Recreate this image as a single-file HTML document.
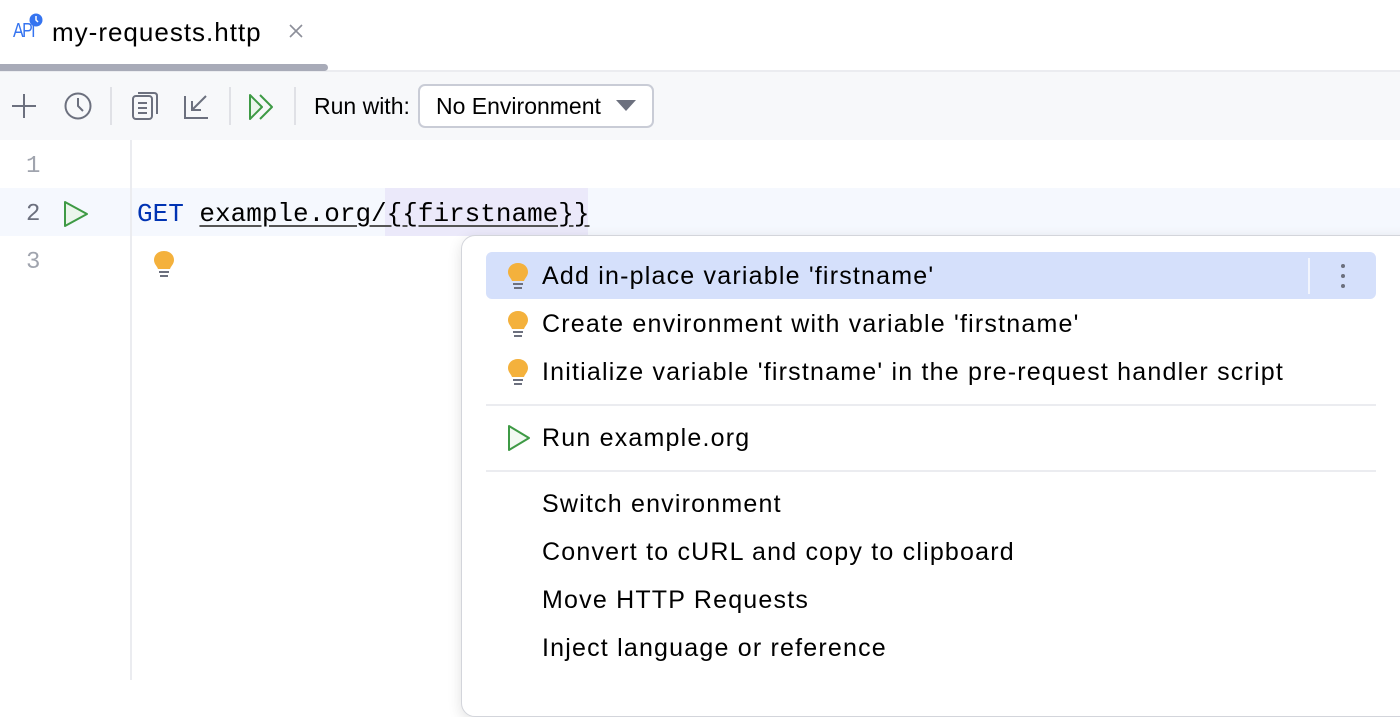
<!DOCTYPE html>
<html><head><style>
body{margin:0;width:1400px;height:680px;overflow:hidden;background:#fff;font-family:"Liberation Sans",sans-serif;position:relative}
.a{position:absolute}
.ui{font-size:25px;letter-spacing:1.2px;color:#000;white-space:nowrap}
.mono{font-family:"Liberation Mono",monospace;font-size:26px;white-space:nowrap}
.sep{position:absolute;top:87px;width:2px;height:38px;background:#e0e1e6}
.bulb{position:absolute;width:22px;height:30px}
</style></head><body>
<div class="a" style="left:0;top:0;width:1400px;height:70px;background:#fff;border-bottom:2px solid #ebecf0"></div>
<div class="a" style="left:0;top:64px;width:328px;height:7px;background:#a8abb8;border-radius:0 4px 4px 0"></div>
<div class="a" style="left:13px;top:20px;font-family:'Liberation Sans',sans-serif;font-size:20px;color:#3574f0;letter-spacing:-2px;transform:scaleX(0.8);transform-origin:left">API</div>
<svg class="a" style="left:28px;top:12px" width="16" height="16"><circle cx="8" cy="8" r="6.5" fill="#3574f0"/><path d="M8 4v4l2 2" stroke="#fff" stroke-width="1.5" fill="none"/></svg>
<div class="a ui" style="left:52px;top:17px;font-size:26px;letter-spacing:1px">my-requests.http</div>
<svg class="a" style="left:288px;top:23px" width="16" height="16"><path d="M2 2L14 14M14 2L2 14" stroke="#8c8f99" stroke-width="1.6"/></svg>
<div class="a" style="left:0;top:72px;width:1400px;height:68px;background:#f7f8fa"></div>
<svg class="a" style="left:10px;top:92px" width="28" height="28"><path d="M14 2V26M2 14H26" stroke="#6c707e" stroke-width="2"/></svg>
<svg class="a" style="left:62px;top:90px" width="32" height="32"><circle cx="16" cy="16" r="12.5" stroke="#6c707e" stroke-width="2" fill="none"/><path d="M16 8V16L21 21" stroke="#6c707e" stroke-width="2" fill="none"/></svg>
<div class="sep" style="left:110px"></div>
<svg class="a" style="left:130px;top:90px" width="30" height="32"><rect x="3" y="6" width="19" height="23" rx="3" stroke="#6c707e" stroke-width="2" fill="none"/><path d="M8 3H24Q27 3 27 6V24" stroke="#6c707e" stroke-width="2" fill="none"/><path d="M8 13H17M8 18H17M8 23H17" stroke="#6c707e" stroke-width="2"/></svg>
<svg class="a" style="left:182px;top:90px" width="30" height="32"><path d="M3 6V28H26" stroke="#6c707e" stroke-width="2" fill="none"/><path d="M24 6L10 20M10 11V20H19" stroke="#6c707e" stroke-width="2" fill="none"/></svg>
<div class="sep" style="left:229px"></div>
<svg class="a" style="left:247px;top:92px" width="30" height="30"><path d="M3 3L15 15L3 27Z" stroke="#3e9a45" stroke-width="2" fill="#ebf5ec" stroke-linejoin="round"/><path d="M13 3L25 15L13 27" stroke="#3e9a45" stroke-width="2" fill="none" stroke-linejoin="round"/></svg>
<div class="sep" style="left:294px"></div>
<div class="a" style="left:314px;top:93px;font-size:23px;color:#000;white-space:nowrap">Run with:</div>
<div class="a" style="left:418px;top:84px;width:232px;height:40px;border:2px solid #c9ccd6;border-radius:7px;background:#fff"></div>
<div class="a" style="left:436px;top:93px;font-size:23px;white-space:nowrap">No Environment</div>
<svg class="a" style="left:616px;top:100px" width="20" height="12"><path d="M0 0H20L10 11Z" fill="#6c707e"/></svg>
<div class="a" style="left:0;top:188px;width:1400px;height:48px;background:#f5f8fe"></div>
<div class="a" style="left:130px;top:140px;width:2px;height:540px;background:#ebecf0"></div>
<div class="a mono" style="left:26px;top:153px;color:#a0a4ae;font-size:24px">1</div>
<div class="a mono" style="left:26px;top:201px;color:#6c707e;font-size:24px">2</div>
<div class="a mono" style="left:26px;top:249px;color:#a0a4ae;font-size:24px">3</div>
<svg class="a" style="left:62px;top:200px" width="28" height="28"><path d="M3 2L25 14L3 26Z" stroke="#3e9a45" stroke-width="2" fill="#ebf5ec" stroke-linejoin="round"/></svg>
<div class="a" style="left:385px;top:188px;width:203px;height:48px;background:#ebe9fa"></div>
<div class="a mono" style="left:137px;top:199px"><span style="color:#0033b3">GET</span><span style="color:#bbb"> </span><span style="color:#000;text-decoration:underline;text-decoration-color:#555;text-underline-offset:4px">example.org/{{firstname}}</span></div>
<svg class="bulb" style="left:153px;top:250px" viewBox="0 0 22 30"><path d="M11 1C5 1 1 5 1 10C1 14 4 16 5 19H17C18 16 21 14 21 10C21 5 17 1 11 1Z" fill="#f4b13c"/><path d="M6 22H16M7 26H15" stroke="#6c707e" stroke-width="2"/></svg>
<div class="a" style="left:461px;top:235px;width:960px;height:480px;background:#fff;border:1px solid #d3d5db;border-radius:14px;box-shadow:0 4px 14px rgba(0,0,0,.12)"></div>
<div class="a" style="left:486px;top:252px;width:890px;height:47px;background:#d5e0fb;border-radius:6px"></div>
<div class="a" style="left:1308px;top:258px;width:2px;height:36px;background:#f2f5fd"></div>
<svg class="a" style="left:1338px;top:263px" width="10" height="26"><circle cx="5" cy="3" r="2" fill="#6c707e"/><circle cx="5" cy="13" r="2" fill="#6c707e"/><circle cx="5" cy="23" r="2" fill="#6c707e"/></svg>
<svg class="bulb" style="left:507px;top:262px" viewBox="0 0 22 30"><path d="M11 1C5 1 1 5 1 10C1 14 4 16 5 19H17C18 16 21 14 21 10C21 5 17 1 11 1Z" fill="#f4b13c"/><path d="M6 22H16M7 26H15" stroke="#6c707e" stroke-width="2"/></svg>
<svg class="bulb" style="left:507px;top:310px" viewBox="0 0 22 30"><path d="M11 1C5 1 1 5 1 10C1 14 4 16 5 19H17C18 16 21 14 21 10C21 5 17 1 11 1Z" fill="#f4b13c"/><path d="M6 22H16M7 26H15" stroke="#6c707e" stroke-width="2"/></svg>
<svg class="bulb" style="left:507px;top:358px" viewBox="0 0 22 30"><path d="M11 1C5 1 1 5 1 10C1 14 4 16 5 19H17C18 16 21 14 21 10C21 5 17 1 11 1Z" fill="#f4b13c"/><path d="M6 22H16M7 26H15" stroke="#6c707e" stroke-width="2"/></svg>
<div class="a ui" style="left:542px;top:262px">Add in-place variable 'firstname'</div>
<div class="a ui" style="left:542px;top:310px">Create environment with variable 'firstname'</div>
<div class="a ui" style="left:542px;top:358px">Initialize variable 'firstname' in the pre-request handler script</div>
<div class="a" style="left:486px;top:404px;width:890px;height:2px;background:#ebecf0"></div>
<svg class="a" style="left:506px;top:424px" width="26" height="28"><path d="M3 2L23 14L3 26Z" stroke="#3e9a45" stroke-width="2" fill="#f2f9f2" stroke-linejoin="round"/></svg>
<div class="a ui" style="left:542px;top:424px">Run example.org</div>
<div class="a" style="left:486px;top:470px;width:890px;height:2px;background:#ebecf0"></div>
<div class="a ui" style="left:542px;top:490px">Switch environment</div>
<div class="a ui" style="left:542px;top:538px">Convert to cURL and copy to clipboard</div>
<div class="a ui" style="left:542px;top:586px">Move HTTP Requests</div>
<div class="a ui" style="left:542px;top:634px">Inject language or reference</div>
</body></html>
